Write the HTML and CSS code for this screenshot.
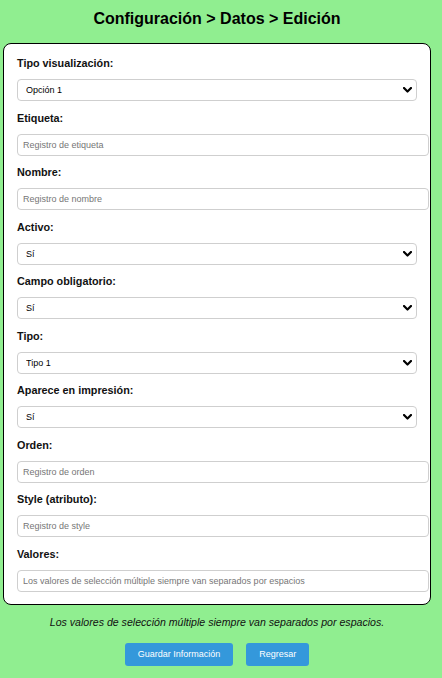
FILE: index.html
```html
<!DOCTYPE html>
<html lang="es">
<head>
<meta charset="utf-8">
<title>Configuración > Datos > Edición</title>
<link rel="stylesheet" href="styles.css">
</head>
<body>
<div class="page">
  <h1 class="title">Configuración &gt; Datos &gt; Edición</h1>
  <form class="card">
    <div class="group">
      <label class="label">Tipo visualización:</label>
      <div class="select-wrap">
        <select class="select"><option>Opción 1</option></select>
        <svg class="chev" viewBox="0 0 9 6" width="9" height="6"><polyline points="1,1 4.5,4.5 8,1" fill="none" stroke="#000" stroke-width="2.2" stroke-linecap="round" stroke-linejoin="round"/></svg>
      </div>
    </div>
    <div class="group">
      <label class="label">Etiqueta:</label>
      <input class="input" type="text" placeholder="Registro de etiqueta">
    </div>
    <div class="group">
      <label class="label">Nombre:</label>
      <input class="input" type="text" placeholder="Registro de nombre">
    </div>
    <div class="group">
      <label class="label">Activo:</label>
      <div class="select-wrap">
        <select class="select"><option>Sí</option></select>
        <svg class="chev" viewBox="0 0 9 6" width="9" height="6"><polyline points="1,1 4.5,4.5 8,1" fill="none" stroke="#000" stroke-width="2.2" stroke-linecap="round" stroke-linejoin="round"/></svg>
      </div>
    </div>
    <div class="group">
      <label class="label">Campo obligatorio:</label>
      <div class="select-wrap">
        <select class="select"><option>Sí</option></select>
        <svg class="chev" viewBox="0 0 9 6" width="9" height="6"><polyline points="1,1 4.5,4.5 8,1" fill="none" stroke="#000" stroke-width="2.2" stroke-linecap="round" stroke-linejoin="round"/></svg>
      </div>
    </div>
    <div class="group">
      <label class="label">Tipo:</label>
      <div class="select-wrap">
        <select class="select"><option>Tipo 1</option></select>
        <svg class="chev" viewBox="0 0 9 6" width="9" height="6"><polyline points="1,1 4.5,4.5 8,1" fill="none" stroke="#000" stroke-width="2.2" stroke-linecap="round" stroke-linejoin="round"/></svg>
      </div>
    </div>
    <div class="group">
      <label class="label">Aparece en impresión:</label>
      <div class="select-wrap">
        <select class="select"><option>Sí</option></select>
        <svg class="chev" viewBox="0 0 9 6" width="9" height="6"><polyline points="1,1 4.5,4.5 8,1" fill="none" stroke="#000" stroke-width="2.2" stroke-linecap="round" stroke-linejoin="round"/></svg>
      </div>
    </div>
    <div class="group">
      <label class="label">Orden:</label>
      <input class="input" type="text" placeholder="Registro de orden">
    </div>
    <div class="group">
      <label class="label">Style (atributo):</label>
      <input class="input" type="text" placeholder="Registro de style">
    </div>
    <div class="group">
      <label class="label">Valores:</label>
      <input class="input" type="text" placeholder="Los valores de selección múltiple siempre van separados por espacios">
    </div>
  </form>
  <p class="note">Los valores de selección múltiple siempre van separados por espacios.</p>
  <div class="actions">
    <button class="btn" type="button">Guardar Información</button>
    <button class="btn" type="button">Regresar</button>
  </div>
</div>
</body>
</html>
```

FILE: styles.css
```css
* { box-sizing: border-box; }

html, body {
  margin: 0;
  padding: 0;
  background: #90ee90;
  font-family: "Liberation Sans", Arial, sans-serif;
  color: #000;
}

.page {
  margin-left: 3px;
  width: 428px;
  display: flex;
  flex-direction: column;
}

.title {
  margin: 9px 0 14px;
  font-size: 16px;
  line-height: 20px;
  font-weight: bold;
  text-align: center;
}

.card {
  margin: 0;
  background: #fff;
  border: 1px solid #000;
  border-radius: 8px;
  padding: 13px 13px 12px;
  display: flex;
  flex-direction: column;
  gap: 10.5px;
}

.group {
  display: flex;
  flex-direction: column;
}

.label {
  display: block;
  font-size: 10.8px;
  line-height: 13px;
  font-weight: bold;
  color: #111;
  margin-bottom: 9px;
}

.select-wrap {
  position: relative;
  width: 100%;
}

.select {
  -webkit-appearance: none;
  appearance: none;
  width: 100%;
  height: 22px;
  margin: 0;
  border: 1px solid #cfcfcf;
  border-radius: 4px;
  background: #fff;
  padding: 0 20px 0 8px;
  font-family: "Liberation Sans", Arial, sans-serif;
  font-size: 9px;
  color: #000;
}

.chev {
  position: absolute;
  right: 5px;
  top: 8px;
  pointer-events: none;
}

.input {
  width: calc(100% + 12px);
  height: 22px;
  margin: 0;
  border: 1px solid #cfcfcf;
  border-radius: 4px;
  background: #fff;
  padding: 0 5px;
  font-family: "Liberation Sans", Arial, sans-serif;
  font-size: 9px;
  color: #000;
}

.input::placeholder {
  color: #767676;
}

.note {
  margin: 10px 0 0;
  font-size: 10.6px;
  line-height: 14px;
  font-style: italic;
  text-align: center;
  color: #111;
}

.actions {
  margin-top: 14px;
  display: flex;
  justify-content: center;
  gap: 13px;
}

.btn {
  height: 23px;
  padding: 0 13px;
  border: 0;
  border-radius: 3px;
  background: #3498db;
  color: #fff;
  font-family: "Liberation Sans", Arial, sans-serif;
  font-size: 9px;
}
```
